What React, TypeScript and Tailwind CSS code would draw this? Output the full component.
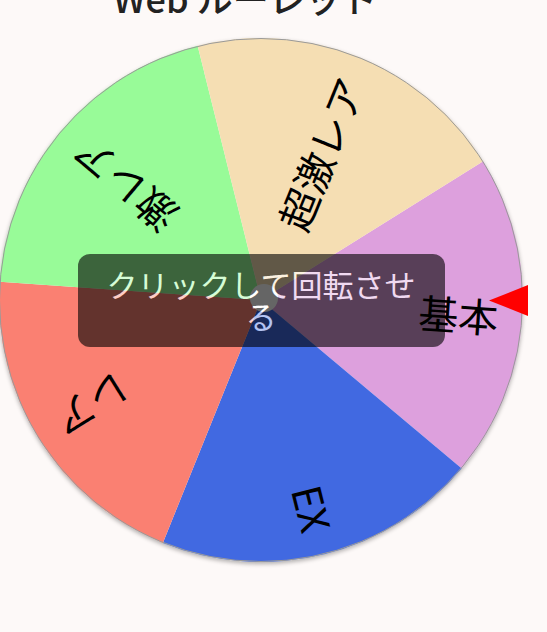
import React from "react";

const R = 262;
const C = 262;
const segs = [
  { label: "基本", color: "#DDA0DD" },
  { label: "EX", color: "#4169E1" },
  { label: "レア", color: "#FA8072" },
  { label: "激レア", color: "#98FB98" },
  { label: "超激レア", color: "#F5DEB3" },
];
const START = -32;
const STEP = 360 / segs.length;

function pt(deg: number, r: number) {
  const a = (deg * Math.PI) / 180;
  return [C + r * Math.cos(a), C + r * Math.sin(a)];
}

function Wheel() {
  return (
    <svg width={524} height={524} viewBox="0 0 524 524" className="block">
      {segs.map((s, i) => {
        const a1 = START + STEP * i;
        const a2 = a1 + STEP;
        const [x1, y1] = pt(a1, R);
        const [x2, y2] = pt(a2, R);
        return (
          <path
            key={"p" + i}
            d={`M ${C} ${C} L ${x1} ${y1} A ${R} ${R} 0 0 1 ${x2} ${y2} Z`}
            fill={s.color}
          />
        );
      })}
      <circle cx={C} cy={C} r={R - 0.5} fill="none" stroke="#9a9a9a" strokeWidth={1} />
      {segs.map((s, i) => {
        const mid = START + STEP * i + STEP / 2;
        return (
          <text
            key={"t" + i}
            transform={`translate(${C} ${C}) rotate(${mid})`}
            x={R - 24}
            y={0}
            textAnchor="end"
            dominantBaseline="central"
            fontSize={40}
            fill="#000"
            style={{ fontFamily: '"Noto Sans CJK JP", "Noto Sans", sans-serif' }}
          >
            {s.label}
          </text>
        );
      })}
      <circle cx={C + 3} cy={C - 2} r={14} fill="#ffffff" />
    </svg>
  );
}

export default function App() {
  return (
    <div
      className="min-h-screen w-full overflow-hidden bg-[#fdf9f8]"
      style={{ fontFamily: '"Noto Sans CJK JP", "Noto Sans", sans-serif' }}
    >
      <h1 className="mt-[-25px] w-[490px] text-center text-[36px] leading-[44px] font-medium text-[#222]">
        Web ルーレット
      </h1>
      <div className="relative ml-[-1px] mt-[19px] h-[524px] w-[524px]">
        <div className="rounded-full shadow-[0_2px_4px_rgba(0,0,0,0.3)]">
          <Wheel />
        </div>
        <div className="absolute inset-0 flex items-center justify-center">
          <button className="flex h-[93px] w-[367px] items-center justify-center rounded-[12px] bg-black px-[20px] text-center text-[31px] leading-[32px] text-white opacity-60">
            クリックして回転させる
          </button>
        </div>
        <svg
          className="absolute left-[490px] top-[247px]"
          width={39}
          height={31}
          viewBox="0 0 39 31"
        >
          <polygon points="0,15.5 39,0 39,31" fill="#ff0000" />
        </svg>
      </div>
    </div>
  );
}
